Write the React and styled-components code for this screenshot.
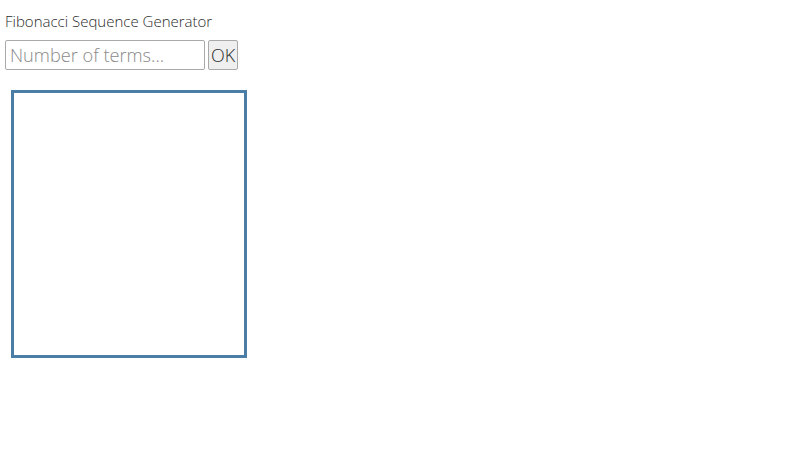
import React, { useState } from "react";
import styled, { createGlobalStyle } from "styled-components";

const GlobalStyle = createGlobalStyle`
  body {
    margin: 0;
    background: #fff;
    font-family: "Open Sans", sans-serif;
    font-weight: 300;
    color: #2b2b2b;
  }
`;

const Page = styled.div`
  padding: 11px 5px;
  display: flex;
  flex-direction: column;
`;

const Title = styled.div`
  font-size: 15px;
  line-height: 21px;
  margin-bottom: 8px;
`;

const Form = styled.form`
  display: flex;
  align-items: stretch;
  gap: 3px;
`;

const TermsInput = styled.input`
  width: 200px;
  height: 30px;
  box-sizing: border-box;
  border: 1px solid #a9a9a9;
  border-radius: 2px;
  padding: 0 4px;
  font-family: "Open Sans", sans-serif;
  font-weight: 300;
  font-size: 18.2px;
  color: #2b2b2b;
  outline: none;

  &::placeholder {
    color: #8a8a8a;
  }
`;

const OkButton = styled.button`
  height: 30px;
  padding: 0 2px;
  border: 1px solid #a9a9a9;
  border-radius: 2px;
  background: #efefef;
  font-family: "Open Sans", sans-serif;
  font-weight: 300;
  font-size: 18px;
  color: #2b2b2b;
`;

const Output = styled.div`
  margin: 20px 0 0 6px;
  width: 236px;
  height: 268px;
  box-sizing: border-box;
  border: 3px solid #4a7ea6;
`;

const App = () => {
  const [terms, setTerms] = useState("");

  return (
    <>
      <GlobalStyle />
      <Page>
        <Title>Fibonacci Sequence Generator</Title>
        <Form onSubmit={(e) => e.preventDefault()}>
          <TermsInput
            placeholder="Number of terms..."
            value={terms}
            onChange={(e) => setTerms(e.target.value)}
          />
          <OkButton type="submit">OK</OkButton>
        </Form>
        <Output />
      </Page>
    </>
  );
};

export default App;
